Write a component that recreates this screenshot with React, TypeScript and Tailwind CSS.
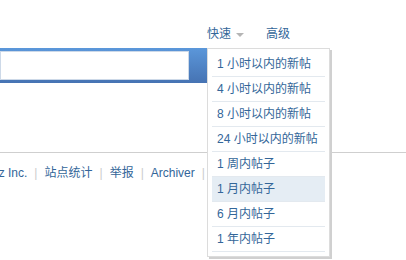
const items = [
  "1 小时以内的新帖",
  "4 小时以内的新帖",
  "8 小时以内的新帖",
  "24 小时以内的新帖",
  "1 周内帖子",
  "1 月内帖子",
  "6 月内帖子",
  "1 年内帖子",
];

const footerLinks = ["站点统计", "举报", "Archiver"];

function Pipe() {
  return <span className="mx-[7px] text-[#ccc]">|</span>;
}

// --- quick search dropdown (overlays the page) ---

function QuickMenu() {
  return (
    <div className="absolute left-[207px] top-[48px] w-[123px] border border-[#dcdcdc] bg-white px-[4px] pt-[3px] pb-[4px] shadow-[2px_2px_0_#d0d0d0]">
      {items.map((item, i) => (
        <div
          key={item}
          className={
            "h-[25px] border-b border-[#e3e9ef] pl-[5px] leading-[24px] text-[#336699] " +
            (i === 5 ? "bg-[#e5edf4]" : "")
          }
        >
          {item}
        </div>
      ))}
    </div>
  );
}

export default function App() {
  return (
    <div
      className="relative h-[260px] w-[406px] overflow-hidden bg-white text-[12px]"
      style={{ fontFamily: '"Liberation Sans", "Noto Sans CJK SC", sans-serif' }}
    >
      {/* search type tabs */}
      <div className="flex h-[48px] items-start pl-[207px] pt-[26px] leading-[16px] text-[#336699]">
        <span className="flex items-center">
          快速
          <span className="ml-[5px] mt-[2px] h-0 w-0 border-x-[4px] border-t-[4px] border-x-transparent border-t-[#b5b5b5]" />
        </span>
        <span className="ml-[22px]">高级</span>
      </div>

      {/* search bar */}
      <div className="flex h-[35px] w-[207px] bg-gradient-to-b from-[#5b97da] to-[#4673b3] pt-[3px] pb-[3px] pr-[18px]">
        <div className="flex-1 border border-[#cdd9e8] bg-white" />
      </div>

      {/* footer */}
      <div className="mt-[69px] border-t border-[#cfcfcf]">
        <div className="ml-[-46px] flex pt-[12px] leading-[16px] text-[#336699]">
          <span>Comsenz Inc.</span>
          {footerLinks.map((link) => (
            <span key={link} className="flex">
              <Pipe />
              <span>{link}</span>
            </span>
          ))}
          <Pipe />
        </div>
      </div>

      <QuickMenu />
    </div>
  );
}
